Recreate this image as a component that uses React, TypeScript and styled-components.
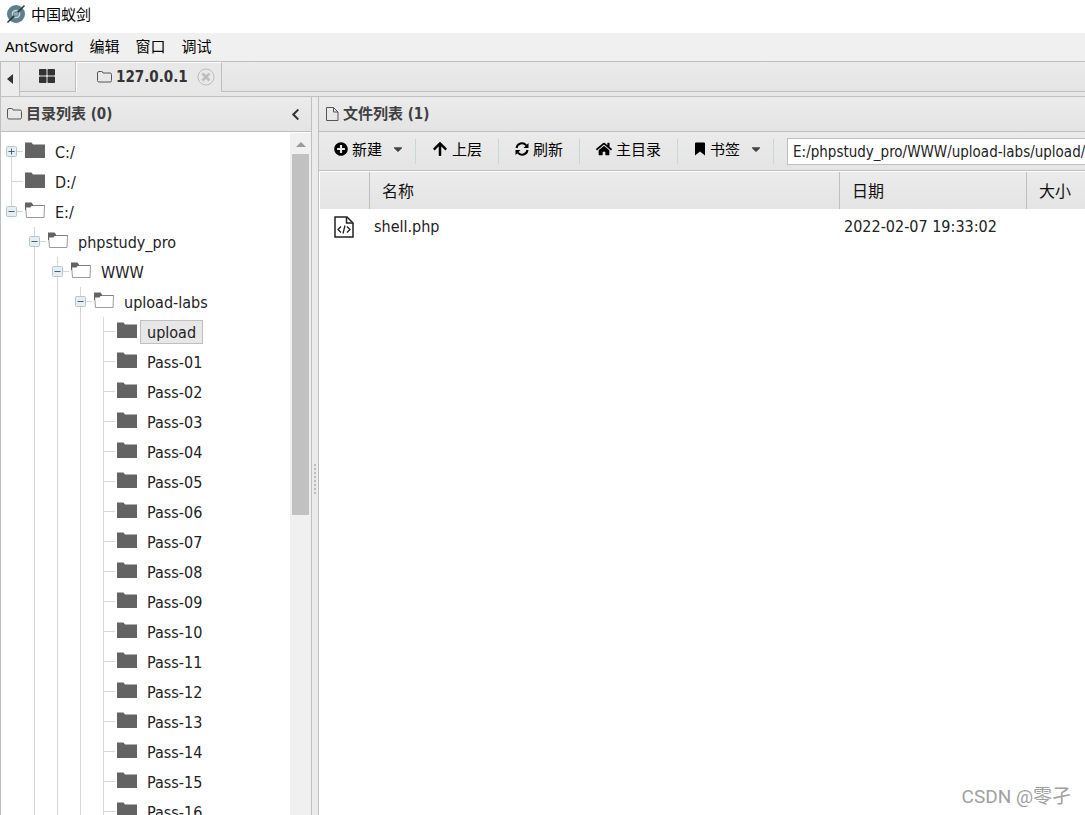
import React from "react";
import styled, { createGlobalStyle, css } from "styled-components";
import { FaPlusCircle, FaArrowUp, FaHome, FaCaretDown, FaThLarge, FaChevronLeft } from "react-icons/fa";

const ui = `"Noto Sans", "Noto Sans CJK SC", sans-serif`;
const content = `"DejaVu Sans Condensed", "DejaVu Sans", "Noto Sans CJK SC", sans-serif`;
const line = "#bfbfbf";
const shade = "linear-gradient(#ebebeb, #e4e4e4)";

const Global = createGlobalStyle`
  * { box-sizing: border-box; }
  html, body, #root { height: 100%; }
  body { margin: 0; overflow: hidden; background: #fff; color: #222; font: 15px/20px ${ui}; }
  button { border: 0; padding: 0; margin: 0; background: none; color: inherit; font: inherit; }
  svg { display: block; flex: none; }
`;

const Window = styled.div`
  display: flex;
  flex-direction: column;
  height: 100%;
`;
const TitleBar = styled.header`
  display: flex;
  align-items: center;
  gap: 5px;
  flex: none;
  height: 33px;
  padding: 0 6px 6px;
  color: #000;
`;
const MenuBar = styled.nav`
  display: flex;
  align-items: center;
  gap: 16px;
  flex: none;
  height: 28px;
  padding: 0 5px 2px;
  background: #f0f0f0;
  color: #000;
`;
const TabStrip = styled.div`
  display: flex;
  flex: none;
  height: 36px;
  border-top: 1px solid ${line};
  border-bottom: 1px solid ${line};
  background: #e7e7e7;
`;
const ScrollTabs = styled.button`
  display: flex;
  align-items: center;
  justify-content: center;
  width: 20px;
  border-right: 1px solid ${line};
  border-left: 1px solid ${line};
  background: #ececec;
`;
const Tabs = styled.div`
  display: flex;
  flex: 1;
  height: 30px;
  border-bottom: 1px solid ${line};
  background: ${shade};
`;
const Tab = styled.div<{ $active?: boolean }>`
  display: flex;
  align-items: center;
  border-right: 1px solid ${line};
  ${(p) =>
    p.$active
      ? css`
          height: 30px;
          padding: 0 6px 1px 20px;
          border-left: 1px solid #fff;
          border-top: 1px solid #fff;
          background: #e8e8e8;
        `
      : css`
          height: 29px;
          padding: 0 20px 1px 19px;
        `}
`;
const TabLabel = styled.button`
  display: flex;
  align-items: center;
  gap: 4px;
  color: #333;
  font: bold 15px/20px ${content};
`;
const CloseButton = styled.button`
  margin-left: 9px;
`;
const Body = styled.main`
  display: flex;
  flex: 1;
  min-height: 0;
`;
const Side = styled.section`
  display: flex;
  flex-direction: column;
  flex: none;
  width: 312px;
  border-left: 1px solid ${line};
  border-right: 1px solid ${line};
`;
const Splitter = styled.div`
  display: flex;
  align-items: center;
  justify-content: center;
  flex: none;
  width: 6px;
  padding-top: 46px;
  background: #ebebeb;
`;
const Grip = styled.div`
  width: 2px;
  height: 30px;
  background: repeating-linear-gradient(#bdbdbd 0 2px, #e6e6e6 2px 4px);
`;
const Files = styled.section`
  display: flex;
  flex-direction: column;
  flex: 1;
  min-width: 0;
  border-left: 1px solid ${line};
`;
const PanelHead = styled.div`
  display: flex;
  align-items: center;
  justify-content: space-between;
  flex: none;
  height: 35px;
  padding: 0 9px 0 6px;
  border-bottom: 1px solid ${line};
  background: ${shade};
`;
const PanelTitle = styled.h2`
  display: flex;
  align-items: center;
  gap: 4px;
  margin: 0;
  color: #404040;
  font: bold 15px/20px ${content};
`;
const TreeWrap = styled.div`
  display: flex;
  flex: 1;
  min-height: 0;
`;
const Tree = styled.ul`
  flex: 1;
  margin: 0;
  padding: 5px 0 0;
  overflow: hidden;
  list-style: none;
`;
const Row = styled.li`
  display: flex;
  align-items: center;
  height: 30px;
`;

type GuideLine = "none" | "full" | "top" | "bottom";
const stroke = "linear-gradient(#d6d6d6, #d6d6d6) no-repeat";
const rails: Record<GuideLine, string> = {
  none: "",
  full: `${stroke} 10px 0 / 1px 30px`,
  top: `${stroke} 10px 0 / 1px 15px`,
  bottom: `${stroke} 10px 15px / 1px 15px`,
};
const Guide = styled.span<{ $line: GuideLine; $arm?: boolean }>`
  flex: none;
  width: 23px;
  height: 30px;
  padding: 9px 0 0 5px;
  background: ${(p) =>
    [p.$arm ? `${stroke} 10px 14px / 12px 1px` : "", rails[p.$line]].filter(Boolean).join(", ") || "none"};
`;
const Toggle = styled.button`
  display: block;
  width: 11px;
  height: 11px;
`;
const FolderSlot = styled.span`
  margin-left: 1px;
`;
const NodeLabel = styled.button<{ $selected?: boolean }>`
  height: 24px;
  margin-left: 3px;
  padding: 2px 6px 0;
  border: 1px solid ${(p) => (p.$selected ? line : "transparent")};
  background: ${(p) => (p.$selected ? "#e7e7e7" : "transparent")};
  font: 16px/20px ${content};
`;
const Scrollbar = styled.div`
  display: flex;
  flex-direction: column;
  align-items: center;
  flex: none;
  width: 21px;
  margin-top: 1px;
  padding: 0 2px;
  background: #f0f0f0;
`;
const ScrollUp = styled.button`
  display: flex;
  align-items: center;
  justify-content: center;
  width: 17px;
  height: 21px;
`;
const Thumb = styled.div`
  width: 17px;
  height: 53%;
  background: #c1c1c1;
`;
const Toolbar = styled.div`
  display: flex;
  align-items: center;
  flex: none;
  height: 39px;
  padding-left: 15px;
  border-bottom: 1px solid ${line};
  background: ${shade};
  overflow: hidden;
`;
const Tool = styled.button`
  display: flex;
  align-items: center;
  gap: 4px;
  flex: none;
  height: 25px;
  padding-bottom: 4px;
  color: #000;
`;
const Caret = styled(FaCaretDown)`
  margin-left: 5px;
  color: #444;
`;
const Divider = styled.span<{ $afterMenu?: boolean }>`
  flex: none;
  width: 1px;
  height: 25px;
  margin: 0 16px 0 ${(p) => (p.$afterMenu ? 10 : 16)}px;
  background: #c5d8e0;
  &:last-of-type {
    margin-right: 13px;
  }
`;
const PathInput = styled.input`
  flex: 1 0 320px;
  height: 27px;
  padding: 1px 5px 0;
  border: 1px solid ${line};
  border-radius: 0;
  background: #fff;
  color: #222;
  font: 15px/20px ${content};
`;
const Table = styled.table`
  width: 100%;
  border-collapse: separate;
  border-spacing: 0;
  table-layout: fixed;
  border-top: 1px solid #fff;
  border-left: 1px solid #fff;
`;
const Th = styled.th<{ $w?: number }>`
  width: ${(p) => (p.$w ? `${p.$w}px` : "auto")};
  height: 37px;
  padding: 0 12px;
  border-right: 1px solid ${line};
  background: ${shade};
  color: #111;
  font: 16px/20px ${ui};
  text-align: left;
  white-space: nowrap;
  &:last-child {
    padding-right: 0;
    border-right: 0;
  }
`;
const Td = styled.td`
  height: 34px;
  padding: 1px 4px 0;
  font: 16px/20px ${content};
`;
const FileIconCell = styled(Td)`
  padding-left: 14px;
`;
const Watermark = styled.div`
  position: absolute;
  right: 14px;
  bottom: 6px;
  color: #a0a0a0;
  font: 19px/24px Roboto, "Noto Sans CJK SC", sans-serif;
`;

const Logo = () => (
  <svg width="20" height="20" viewBox="0 0 20 20" aria-hidden="true">
    <circle cx="10" cy="10" r="9" fill="#5f7f8b" />
    <path d="M6.500 11.500c-.8-3.500 1.500-5.500 5-5M13.500 8.500c.8 3.500-1.500 5.500-5 5" fill="none" stroke="#c9d5da" strokeWidth="1.500" />
    <path d="M9 8.500v3M11 8.500v3" stroke="#c9d5da" />
    <path d="M1.500 18.500 8 12M12 8l6.500-6.500" stroke="#29363c" strokeWidth="1.500" />
  </svg>
);
const FolderOutline = () => (
  <svg width="15" height="14" viewBox="0 0 15 14" fill="none" stroke="#555" aria-hidden="true">
    <path d="M.5 3q0-1.500 1.500-1.500h2.500q1.500 0 1.500 1.500h7q1.500 0 1.500 1.500v6q0 1.500-1.500 1.500h-11q-1.500 0-1.500-1.500z" />
  </svg>
);
const PageOutline = () => (
  <svg width="14" height="16" viewBox="0 0 14 16" fill="none" stroke="#555" aria-hidden="true">
    <path d="M1.500 1.500h7l4.500 4.500v8.500H1.500zM8.500 1.500v4.500H13" />
  </svg>
);
const ClosedFolder = () => (
  <svg width="20" height="30" viewBox="0 0 20 30" aria-hidden="true">
    <path d="M0 5.500h6.500l1.500 2H20V21H0z" fill="#636363" />
  </svg>
);
const OpenFolder = () => (
  <svg width="20" height="30" viewBox="0 0 20 30" aria-hidden="true">
    <path d="M.5 8.500h19l-.5 12H1.500z" fill="#fff" stroke="#9a9a9a" />
    <path d="M0 5.500h6.500l1.500 2V9H6.500L5.500 10.500H1V13H0z" fill="#636363" />
    <path d="M8 8.500h11.500" stroke="#808080" />
  </svg>
);
const ToggleIcon = ({ plus }: { plus?: boolean }) => (
  <svg width="11" height="11" viewBox="0 0 11 11" aria-hidden="true">
    <rect x=".5" y=".5" width="10" height="10" rx="1" fill="#e6eef2" stroke="#b4c6cf" />
    <path d={plus ? "M2.500 5.500h6M5.500 2.500v6" : "M2.500 5.500h6"} stroke="#456577" />
  </svg>
);
const RefreshIcon = () => (
  <svg width="14" height="14" viewBox="0 0 14 14" aria-hidden="true">
    <path d="M1.500 6a5.500 5.500 0 0 1 9.700-2.700M12.500 8a5.500 5.500 0 0 1-9.700 2.700" fill="none" stroke="#000" strokeWidth="2" />
    <path d="M13.500 1v5h-5zM.5 13V8h5z" />
  </svg>
);
const BookmarkIcon = () => (
  <svg width="12" height="14" viewBox="0 0 12 14" aria-hidden="true">
    <path d="M1 1.500q0-1 1-1h8q1 0 1 1V13.500L6 9.500l-5 4z" />
  </svg>
);
const CloseIcon = () => (
  <svg width="18" height="18" viewBox="0 0 18 18" fill="none" stroke="#bdbdbd" aria-hidden="true">
    <circle cx="9" cy="9" r="8" />
    <path d="m5.500 5.500 7 7M12.500 5.500l-7 7" strokeWidth="2.500" />
  </svg>
);
const CodeFile = () => (
  <svg width="20" height="22" viewBox="0 0 20 22" fill="none" stroke="#222" aria-hidden="true">
    <path d="M1 1h12l6 6v14H1z" strokeWidth="1.500" />
    <path d="M12.500 1v6H19" strokeWidth="1.500" />
    <path d="m7 10.500-3 3 3 3M13 10.500l3 3-3 3M11 9.500l-2 8" strokeWidth="1.300" />
  </svg>
);
const LeftTriangle = () => (
  <svg width="8" height="10" viewBox="0 0 8 10" aria-hidden="true">
    <path d="M7 0v10L1 5z" fill="#333" />
  </svg>
);
const UpTriangle = () => (
  <svg width="10" height="10" viewBox="0 0 10 10" aria-hidden="true">
    <path d="M0 8 5 3l5 5z" fill="#999" />
  </svg>
);

type TreeNode = { name: string; guides: GuideLine[]; kind: "plus" | "minus" | "leaf"; selected?: boolean };
const deep: GuideLine[] = ["none", "full", "full", "full", "full"];
const nodes: TreeNode[] = [
  { name: "C:/", guides: ["bottom"], kind: "plus" },
  { name: "D:/", guides: ["full"], kind: "leaf" },
  { name: "E:/", guides: ["top"], kind: "minus" },
  { name: "phpstudy_pro", guides: deep.slice(0, 2), kind: "minus" },
  { name: "WWW", guides: deep.slice(0, 3), kind: "minus" },
  { name: "upload-labs", guides: deep.slice(0, 4), kind: "minus" },
  { name: "upload", guides: deep, kind: "leaf", selected: true },
  ...Array.from({ length: 16 }, (_, i): TreeNode => ({
    name: `Pass-${String(i + 1).padStart(2, "0")}`,
    guides: deep,
    kind: "leaf",
  })),
];

const TreeRow = ({ node }: { node: TreeNode }) => {
  const last = node.guides.length - 1;
  return (
    <Row>
      {node.guides.map((g, i) => (
        <Guide key={i} $line={g} $arm={i === last}>
          {i === last && node.kind !== "leaf" && (
            <Toggle aria-label={node.kind === "plus" ? "Expand" : "Collapse"}>
              <ToggleIcon plus={node.kind === "plus"} />
            </Toggle>
          )}
        </Guide>
      ))}
      <FolderSlot>{node.kind === "minus" ? <OpenFolder /> : <ClosedFolder />}</FolderSlot>
      <NodeLabel $selected={node.selected}>{node.name}</NodeLabel>
    </Row>
  );
};

export default function App() {
  return (
    <Window>
      <Global />
      <TitleBar>
        <Logo />
        <span>中国蚁剑</span>
      </TitleBar>
      <MenuBar>
        {["AntSword", "编辑", "窗口", "调试"].map((m) => (
          <button key={m}>{m}</button>
        ))}
      </MenuBar>
      <TabStrip>
        <ScrollTabs aria-label="Scroll tabs left">
          <LeftTriangle />
        </ScrollTabs>
        <Tabs>
          <Tab>
            <TabLabel aria-label="Home">
              <FaThLarge size={16} />
            </TabLabel>
          </Tab>
          <Tab $active>
            <TabLabel>
              <FolderOutline />
              127.0.0.1
            </TabLabel>
            <CloseButton aria-label="Close tab">
              <CloseIcon />
            </CloseButton>
          </Tab>
        </Tabs>
      </TabStrip>
      <Body>
        <Side>
          <PanelHead>
            <PanelTitle>
              <FolderOutline />
              目录列表 (0)
            </PanelTitle>
            <button aria-label="Collapse">
              <FaChevronLeft size={13} color="#333" />
            </button>
          </PanelHead>
          <TreeWrap>
            <Tree>
              {nodes.map((n) => (
                <TreeRow key={n.name} node={n} />
              ))}
            </Tree>
            <Scrollbar>
              <ScrollUp aria-label="Scroll up">
                <UpTriangle />
              </ScrollUp>
              <Thumb />
            </Scrollbar>
          </TreeWrap>
        </Side>
        <Splitter>
          <Grip />
        </Splitter>
        <Files>
          <PanelHead>
            <PanelTitle>
              <PageOutline />
              文件列表 (1)
            </PanelTitle>
          </PanelHead>
          <Toolbar>
            <Tool><FaPlusCircle size={14} />新建<Caret size={14} /></Tool>
            <Divider $afterMenu />
            <Tool><FaArrowUp size={16} />上层</Tool>
            <Divider />
            <Tool><RefreshIcon />刷新</Tool>
            <Divider />
            <Tool><FaHome size={16} />主目录</Tool>
            <Divider />
            <Tool><BookmarkIcon />书签<Caret size={14} /></Tool>
            <Divider $afterMenu />
            <PathInput aria-label="Path" defaultValue="E:/phpstudy_pro/WWW/upload-labs/upload/" />
          </Toolbar>
          <Table>
            <thead>
              <tr>
                <Th $w={50} aria-label="Type" />
                <Th $w={470}>名称</Th>
                <Th $w={187}>日期</Th>
                <Th>大小</Th>
              </tr>
            </thead>
            <tbody>
              <tr>
                <FileIconCell><CodeFile /></FileIconCell>
                <Td>shell.php</Td>
                <Td>2022-02-07 19:33:02</Td>
                <Td />
              </tr>
            </tbody>
          </Table>
        </Files>
      </Body>
      <Watermark>CSDN @零孑</Watermark>
    </Window>
  );
}
